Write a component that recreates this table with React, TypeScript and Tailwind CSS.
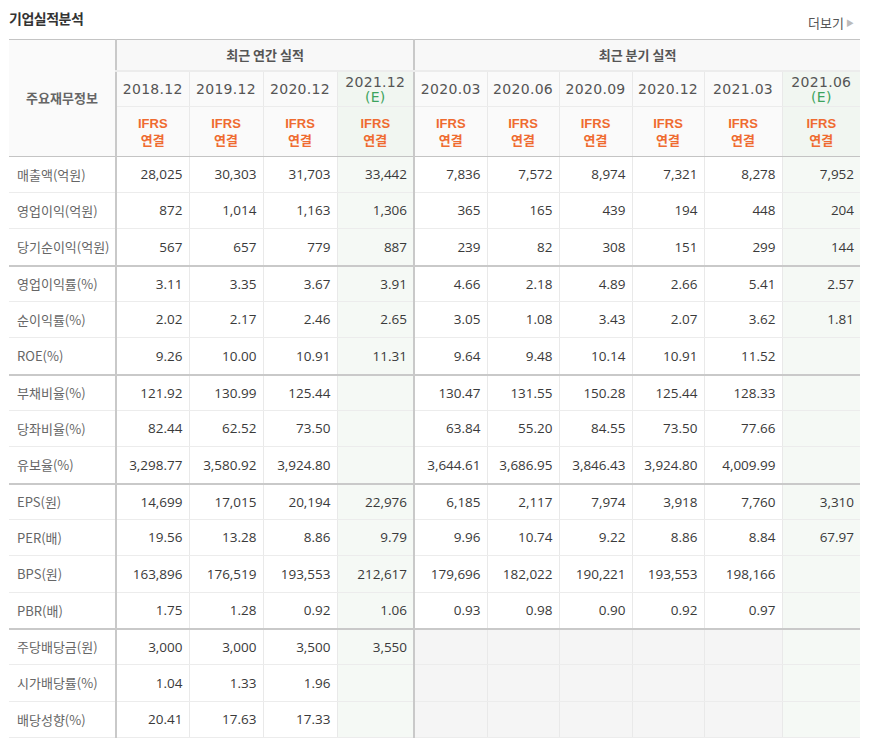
import { FC } from "react";

type Row = { label: string; values: string[]; groupEnd?: boolean; dividend?: boolean };

const annualDates = ["2018.12", "2019.12", "2020.12", "2021.12"];
const quarterDates = ["2020.03", "2020.06", "2020.09", "2020.12", "2021.03", "2021.06"];
const estimateCols = [3, 9];

const rows: Row[] = [
  { label: "매출액(억원)", values: ["28,025", "30,303", "31,703", "33,442", "7,836", "7,572", "8,974", "7,321", "8,278", "7,952"] },
  { label: "영업이익(억원)", values: ["872", "1,014", "1,163", "1,306", "365", "165", "439", "194", "448", "204"] },
  { label: "당기순이익(억원)", values: ["567", "657", "779", "887", "239", "82", "308", "151", "299", "144"], groupEnd: true },
  { label: "영업이익률(%)", values: ["3.11", "3.35", "3.67", "3.91", "4.66", "2.18", "4.89", "2.66", "5.41", "2.57"] },
  { label: "순이익률(%)", values: ["2.02", "2.17", "2.46", "2.65", "3.05", "1.08", "3.43", "2.07", "3.62", "1.81"] },
  { label: "ROE(%)", values: ["9.26", "10.00", "10.91", "11.31", "9.64", "9.48", "10.14", "10.91", "11.52", ""], groupEnd: true },
  { label: "부채비율(%)", values: ["121.92", "130.99", "125.44", "", "130.47", "131.55", "150.28", "125.44", "128.33", ""] },
  { label: "당좌비율(%)", values: ["82.44", "62.52", "73.50", "", "63.84", "55.20", "84.55", "73.50", "77.66", ""] },
  { label: "유보율(%)", values: ["3,298.77", "3,580.92", "3,924.80", "", "3,644.61", "3,686.95", "3,846.43", "3,924.80", "4,009.99", ""], groupEnd: true },
  { label: "EPS(원)", values: ["14,699", "17,015", "20,194", "22,976", "6,185", "2,117", "7,974", "3,918", "7,760", "3,310"] },
  { label: "PER(배)", values: ["19.56", "13.28", "8.86", "9.79", "9.96", "10.74", "9.22", "8.86", "8.84", "67.97"] },
  { label: "BPS(원)", values: ["163,896", "176,519", "193,553", "212,617", "179,696", "182,022", "190,221", "193,553", "198,166", ""] },
  { label: "PBR(배)", values: ["1.75", "1.28", "0.92", "1.06", "0.93", "0.98", "0.90", "0.92", "0.97", ""], groupEnd: true },
  { label: "주당배당금(원)", values: ["3,000", "3,000", "3,500", "3,550", "", "", "", "", "", ""], dividend: true },
  { label: "시가배당률(%)", values: ["1.04", "1.33", "1.96", "", "", "", "", "", "", ""], dividend: true },
  { label: "배당성향(%)", values: ["20.41", "17.63", "17.33", "", "", "", "", "", "", ""], dividend: true },
];

const colWidths = [107, 73, 74, 74, 77, 73, 72, 73, 72, 78, 78];

const leftBorder = (i: number) =>
  i === 0 || i === 4 ? "border-l-2 border-l-[#c9c9c9]" : "border-l border-l-[#e9e9e9]";

const DateCell: FC<{ date: string; i: number }> = ({ date, i }) => {
  const est = estimateCols.includes(i);
  return (
    <th
      className={`h-[36px] p-0 font-normal text-[14px] leading-[16px] text-[#555] border-b border-b-[#ececec] ${leftBorder(i)} ${
        est ? "bg-[#f1f6f1]" : "bg-[#fafafa]"
      }`}
      style={{ fontFamily: '"DejaVu Sans", sans-serif', letterSpacing: "0.3px" }}
    >
      <div className="leading-[16px]">{date}</div>
      {est ? <div className="leading-[14px] text-[#3da35d]">(E)</div> : null}
    </th>
  );
};

const FinanceTable: FC = () => (
  <table className="table-fixed border-collapse w-[851px] border-t border-t-[#c4c4c4] border-b border-b-[#c4c4c4]">
    <colgroup>
      {colWidths.map((w, i) => (
        <col key={i} style={{ width: w }} />
      ))}
    </colgroup>
    <thead>
      <tr>
        <th
          rowSpan={3}
          className="bg-[#fafafa] text-[13px] font-bold text-[#666] border-b border-b-[#c4c4c4]"
        >
          주요재무정보
        </th>
        <th
          colSpan={4}
          className="h-[31px] bg-[#f8f8f8] text-[13px] font-bold text-[#555] border-l-2 border-l-[#c9c9c9] border-b-2 border-b-[#ececec]"
        >
          최근 연간 실적
        </th>
        <th
          colSpan={6}
          className="h-[31px] bg-[#f8f8f8] text-[13px] font-bold text-[#555] border-l-2 border-l-[#c9c9c9] border-b-2 border-b-[#ececec]"
        >
          최근 분기 실적
        </th>
      </tr>
      <tr>
        {[...annualDates, ...quarterDates].map((d, i) => (
          <DateCell key={i} date={d} i={i} />
        ))}
      </tr>
      <tr>
        {colWidths.slice(1).map((_, i) => (
          <th
            key={i}
            className={`h-[50px] p-0 text-[13px] font-bold text-[#ef6b30] border-b border-b-[#c4c4c4] ${leftBorder(i)} ${
              estimateCols.includes(i) ? "bg-[#f1f6f1]" : "bg-[#fafafa]"
            }`}
          >
            <div className="leading-[15px]" style={{ fontFamily: '"Liberation Sans", sans-serif' }}>
              IFRS
            </div>
            <div className="leading-[17px]">연결</div>
          </th>
        ))}
      </tr>
    </thead>
    <tbody>
      {rows.map((row, r) => {
        const bottom = row.groupEnd
          ? "border-b-2 border-b-[#c9c9c9]"
          : "border-b border-b-[#ececec]";
        const height = r % 3 === 2 ? "h-[37px]" : "h-[36px]";
        return (
          <tr key={row.label}>
            <td className={`${height} pl-[8px] text-[13px] text-[#666] bg-white ${bottom}`}>
              {row.label}
            </td>
            {row.values.map((v, i) => {
              const bg = estimateCols.includes(i)
                ? "bg-[#f5f9f5]"
                : row.dividend && i >= 4
                ? "bg-[#f5f5f5]"
                : "bg-white";
              return (
                <td
                  key={i}
                  className={`${height} pr-[6px] text-right text-[13.5px] text-[#3a3a3a] ${leftBorder(i)} ${bg} ${bottom}`}
                  style={{ fontFamily: '"Open Sans", sans-serif' }}
                >
                  {v}
                </td>
              );
            })}
          </tr>
        );
      })}
    </tbody>
  </table>
);

const App: FC = () => {
  return (
    <div
      className="w-[875px] min-h-screen bg-white pl-[9px]"
      style={{ fontFamily: '"Noto Sans CJK KR", "Noto Sans", sans-serif' }}
    >
      <div className="flex justify-between items-start h-[39px] w-[851px]">
        <h2 className="text-[14px] font-bold text-[#333] mt-[8px] tracking-[-0.5px]">기업실적분석</h2>
        <a className="flex items-center mt-[13px] mr-[6px] text-[13px] text-[#555] cursor-pointer">
          더보기
          <span className="ml-[2px] text-[8px] text-[#bbb]">▶</span>
        </a>
      </div>
      <FinanceTable />
    </div>
  );
};

export default App;
